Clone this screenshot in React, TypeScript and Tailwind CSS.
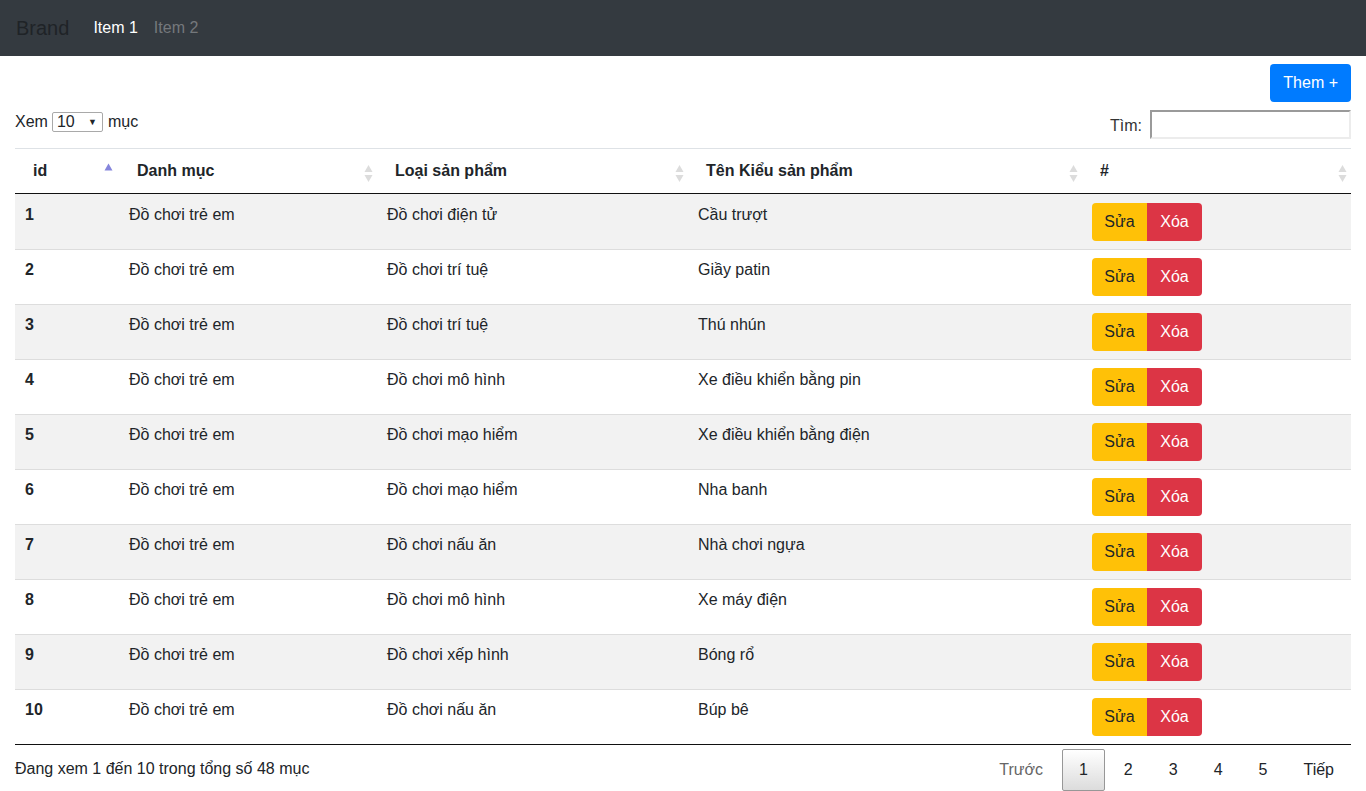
import React from "react";

const rows = [
  ["1", "Đồ chơi trẻ em", "Đồ chơi điện tử", "Cầu trượt"],
  ["2", "Đồ chơi trẻ em", "Đồ chơi trí tuệ", "Giầy patin"],
  ["3", "Đồ chơi trẻ em", "Đồ chơi trí tuệ", "Thú nhún"],
  ["4", "Đồ chơi trẻ em", "Đồ chơi mô hình", "Xe điều khiển bằng pin"],
  ["5", "Đồ chơi trẻ em", "Đồ chơi mạo hiểm", "Xe điều khiển bằng điện"],
  ["6", "Đồ chơi trẻ em", "Đồ chơi mạo hiểm", "Nha banh"],
  ["7", "Đồ chơi trẻ em", "Đồ chơi nấu ăn", "Nhà chơi ngựa"],
  ["8", "Đồ chơi trẻ em", "Đồ chơi mô hình", "Xe máy điện"],
  ["9", "Đồ chơi trẻ em", "Đồ chơi xếp hình", "Bóng rổ"],
  ["10", "Đồ chơi trẻ em", "Đồ chơi nấu ăn", "Búp bê"],
];

function SortBoth() {
  return (
    <svg width="9" height="19" viewBox="0 0 9 19" className="absolute right-[4px] top-[15px]">
      <path d="M4.5 1 L8.5 8 L0.5 8 Z" fill="#dcdcdc" />
      <path d="M4.5 18 L8.5 11 L0.5 11 Z" fill="#dcdcdc" />
    </svg>
  );
}

function SortAsc() {
  return (
    <svg width="9" height="8" viewBox="0 0 9 8" className="absolute right-[6px] top-[14px]">
      <path d="M4.5 0.5 L8.5 7.5 L0.5 7.5 Z" fill="#8585dc" />
    </svg>
  );
}

export default function App() {
  const headers = ["id", "Danh mục", "Loại sản phẩm", "Tên Kiểu sản phẩm", "#"];
  const widths = ["w-[104px]", "w-[258px]", "w-[311px]", "w-[394px]", "w-[269px]"];
  return (
    <div className="min-h-[791px] bg-white text-[16px] leading-6 text-[#212529] font-['Liberation_Sans',Arial,sans-serif]">
      <nav className="flex h-14 items-center bg-[#343a40] px-4">
        <span className="mr-4 text-[20px] leading-[30px] text-[#1f2327]">Brand</span>
        <span className="px-2 text-white">Item 1</span>
        <span className="px-2 text-[#74787c]">Item 2</span>
      </nav>
      <div className="px-[15px]">
        <div className="flex justify-end pt-2">
          <button className="h-[38px] rounded bg-[#007bff] px-[13px] text-white">Them +</button>
        </div>
        <div className="flex items-start justify-between pt-2">
          <div className="flex items-center">
            <span>Xem</span>
            <div className="ml-[4px] mr-[5px] flex h-[20px] w-[51px] items-center justify-between rounded-[2px] border border-[#a9a9a9] pl-[4px] pr-[5px] text-[16px] leading-none">
              <span>10</span>
              <span className="text-[9px]">▼</span>
            </div>
            <span>mục</span>
          </div>
          <div className="flex items-center">
            <span className="mt-[2px] text-[#333]">Tìm:</span>
            <input className="ml-2 h-[29px] w-[201px] border-2 border-t-[#9a9a9a] border-l-[#9a9a9a] border-r-[#ececec] border-b-[#ececec] outline-none" />
          </div>
        </div>
        <table className="mt-[9px] w-full table-fixed border-b border-[#111]">
          <thead>
            <tr className="border-t border-[#dee2e6]">
              {headers.map((h, i) => (
                <th
                  key={h}
                  className={`${widths[i]} relative border-b border-[#111] px-[18px] py-[10px] text-left font-bold`}
                >
                  {h}
                  {i === 0 ? <SortAsc /> : <SortBoth />}
                </th>
              ))}
            </tr>
          </thead>
          <tbody>
            {rows.map((r, idx) => {
              const pad = idx === 0 ? "px-[10px] pt-[9px] pb-2 align-top" : "px-[10px] py-2 align-top";
              return (
                <tr key={r[0]} className={`${idx % 2 === 0 ? "bg-[#f2f2f2]" : "bg-white"} ${idx > 0 ? "border-t border-[#ddd]" : ""}`}>
                  <td className={`${pad} font-bold`}>{r[0]}</td>
                  <td className={pad}>{r[1]}</td>
                  <td className={pad}>{r[2]}</td>
                  <td className={pad}>{r[3]}</td>
                  <td className={pad}>
                    <div className="flex">
                      <button className="h-[38px] w-[55px] rounded-l bg-[#ffc107] text-[#212529]">Sửa</button>
                      <button className="h-[38px] w-[55px] rounded-r bg-[#dc3545] text-white">Xóa</button>
                    </div>
                  </td>
                </tr>
              );
            })}
          </tbody>
        </table>
        <div className="flex items-start justify-between">
          <div className="pt-3">Đang xem 1 đến 10 trong tổng số 48 mục</div>
          <div className="flex pt-1">
            <span className="border border-transparent px-4 py-2 text-[#666]">Trước</span>
            <span className="ml-[2px] rounded-[2px] border border-[#979797] bg-gradient-to-b from-white to-[#dcdcdc] px-4 py-2">1</span>
            <span className="ml-[2px] border border-transparent px-4 py-2">2</span>
            <span className="ml-[2px] border border-transparent px-4 py-2">3</span>
            <span className="ml-[2px] border border-transparent px-4 py-2">4</span>
            <span className="ml-[2px] border border-transparent px-4 py-2">5</span>
            <span className="ml-[2px] border border-transparent px-4 py-2">Tiếp</span>
          </div>
        </div>
      </div>
    </div>
  );
}
